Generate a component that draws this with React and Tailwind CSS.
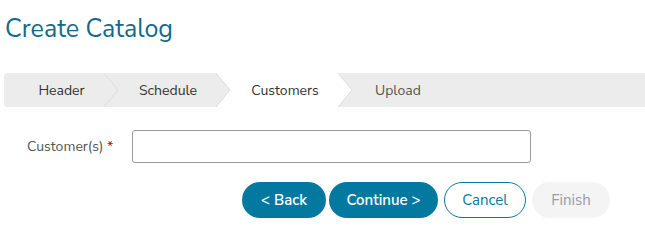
import React from 'react';

const FONT = { fontFamily: '"Nunito Sans", Lato, "Open Sans", sans-serif' };

const Chevron = ({ fill }) => (
  <svg className="absolute top-0 -right-[14px] z-10" width="15" height="34" viewBox="0 0 15 34">
    <polygon points="0,0 14,17 0,34" fill={fill} />
    <polyline points="0,0 14,17 0,34" fill="none" stroke="#dcdcdc" strokeWidth="1" />
  </svg>
);

const Stepper = () => (
  <div className="ml-[4px] flex h-[34px] text-[14px] text-[#333]">
    <div className="relative flex w-[101px] items-center justify-center rounded-l-[4px] bg-[#ececec] pl-[14px]">
      Header
      <Chevron fill="#ececec" />
    </div>
    <div className="relative flex w-[112px] items-center justify-center bg-[#ececec] pl-[14px]">
      Schedule
      <Chevron fill="#ececec" />
    </div>
    <div className="relative flex w-[122px] items-center justify-center bg-white pl-[14px]">
      Customers
      <Chevron fill="#ffffff" />
    </div>
    <div className="flex flex-1 items-center bg-[#ececec] pl-[36px] text-[#555]">
      Upload
    </div>
  </div>
);

export default function App() {
  return (
    <div className="h-[250px] w-[645px] overflow-hidden bg-white" style={FONT}>
      <h1 className="pl-[5px] pt-[12px] text-[25px] leading-[34px] text-[#0f6a8c]">Create Catalog</h1>
      <div className="mt-[27px]">
        <Stepper />
      </div>
      <div className="mt-[23px] flex items-center">
        <label className="w-[132px] pl-[27px] text-[14px] text-[#555]">
          Customer(s) <span className="text-[#d0021b]">*</span>
        </label>
        <input className="h-[33px] w-[399px] rounded-[3px] border border-[#9b9b9b] px-2 outline-none" />
      </div>
      <div className="mt-[19px] flex items-center pl-[242px]">
        <button className="h-[36px] w-[84px] rounded-full bg-[#0479a0] text-[15px] font-semibold text-white">&lt; Back</button>
        <button className="ml-[3px] h-[36px] w-[109px] rounded-full bg-[#0479a0] text-[15px] font-semibold text-white">Continue &gt;</button>
        <button className="ml-[6px] h-[36px] w-[82px] rounded-full border border-[#0479a0] bg-white text-[15px] text-[#0479a0]">Cancel</button>
        <button className="ml-[6px] h-[36px] w-[78px] rounded-full bg-[#f4f4f4] text-[15px] text-[#9a9aa6]">Finish</button>
      </div>
    </div>
  );
}
